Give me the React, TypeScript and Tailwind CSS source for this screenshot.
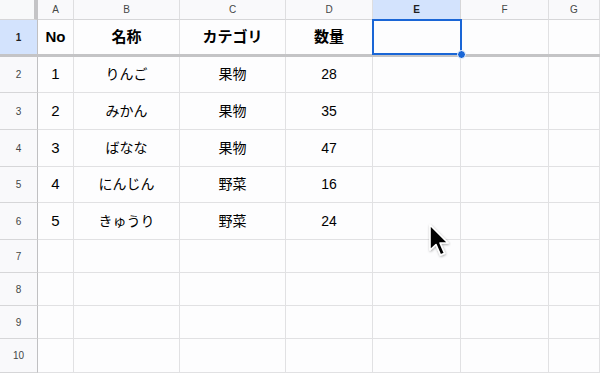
import React from "react";

const cols = [38, 36, 106, 106, 87, 88, 88, 51];
const letters = ["", "A", "B", "C", "D", "E", "F", "G"];
const dataRows: { h: number; cells: string[] }[] = [
  { h: 36, cells: ["1", "りんご", "果物", "28"] },
  { h: 37, cells: ["2", "みかん", "果物", "35"] },
  { h: 37, cells: ["3", "ばなな", "果物", "47"] },
  { h: 36, cells: ["4", "にんじん", "野菜", "16"] },
  { h: 37, cells: ["5", "きゅうり", "野菜", "24"] },
  { h: 33, cells: [] },
  { h: 33, cells: [] },
  { h: 33, cells: [] },
  { h: 34, cells: [] },
];

const font = { fontFamily: '"Liberation Sans", "Noto Sans CJK JP", sans-serif' };

export default function App() {
  return (
    <div className="relative w-[600px] h-[373px] overflow-hidden bg-[#fdfdfe] text-[#1f1f1f]" style={font}>
      {/* Column header row */}
      <div className="flex h-[20px]">
        {cols.map((w, i) => (
          <div
            key={i}
            style={{ width: w }}
            className={
              "shrink-0 h-full border-b border-[#d6d6d8] flex items-center justify-center text-[10px] " +
              (i === 0
                ? "bg-[#f8f9fa] border-r-[4px] border-r-[#c4c4c6]"
                : i === 5
                ? "bg-[#d3e3fd] border-r border-r-[#d6d6d8] font-bold text-[#1f1f1f]"
                : "bg-[#f9f9fb] border-r border-r-[#dedee0] text-[#444746]")
            }
          >
            {letters[i]}
          </div>
        ))}
      </div>
      {/* Row 1 */}
      <div className="flex h-[34px]">
        {cols.map((w, i) => (
          <div
            key={i}
            style={{ width: w }}
            className={
              "shrink-0 h-full flex items-center justify-center " +
              (i === 0
                ? "bg-[#d3e3fd] border-r border-[#c0c0c2] text-[10px] font-bold"
                : "border-r border-[#e1e1e3] text-[15px] font-bold text-black")
            }
          >
            {i === 0 ? "1" : ["No", "名称", "カテゴリ", "数量"][i - 1] ?? ""}
          </div>
        ))}
      </div>
      {/* Freeze line */}
      <div className="h-[3px] bg-[#c4c4c6]" />
      {dataRows.map((r, ri) => (
        <div key={ri} className="flex" style={{ height: r.h }}>
          {cols.map((w, i) => (
            <div
              key={i}
              style={{ width: w }}
              className={
                "shrink-0 h-full border-b flex items-center justify-center " +
                (i === 0
                  ? "bg-[#f9f9fb] border-r border-r-[#c0c0c2] border-b-[#d6d6d8] text-[10px] text-[#444746]"
                  : "border-r border-[#e1e1e3] text-[14px] text-black " + (i === 1 ? "text-[15px]" : ""))
              }
            >
              {i === 0 ? String(ri + 2) : r.cells[i - 1] ?? ""}
            </div>
          ))}
        </div>
      ))}
      {/* Selection */}
      <div className="absolute left-[372px] top-[19px] w-[90px] h-[36px] border-2 border-[#1a66d6]" />
      <div className="absolute left-[457px] top-[50px] w-[9px] h-[9px] rounded-full bg-[#1a66d6] border border-white" />
      {/* Cursor */}
      <svg className="absolute left-[427px] top-[223px]" width="24" height="38" viewBox="0 0 24 38">
        <defs>
          <filter id="sh" x="-50%" y="-50%" width="200%" height="200%">
            <feDropShadow dx="0.5" dy="1" stdDeviation="1" floodOpacity="0.35" />
          </filter>
        </defs>
        <path
          d="M3 2 L3 27 L9 21.5 L13.5 32 L17.5 30.3 L13 20 L21 20 Z"
          fill="#000"
          stroke="#fff"
          strokeWidth="1.6"
          strokeLinejoin="round"
          filter="url(#sh)"
        />
      </svg>
    </div>
  );
}
